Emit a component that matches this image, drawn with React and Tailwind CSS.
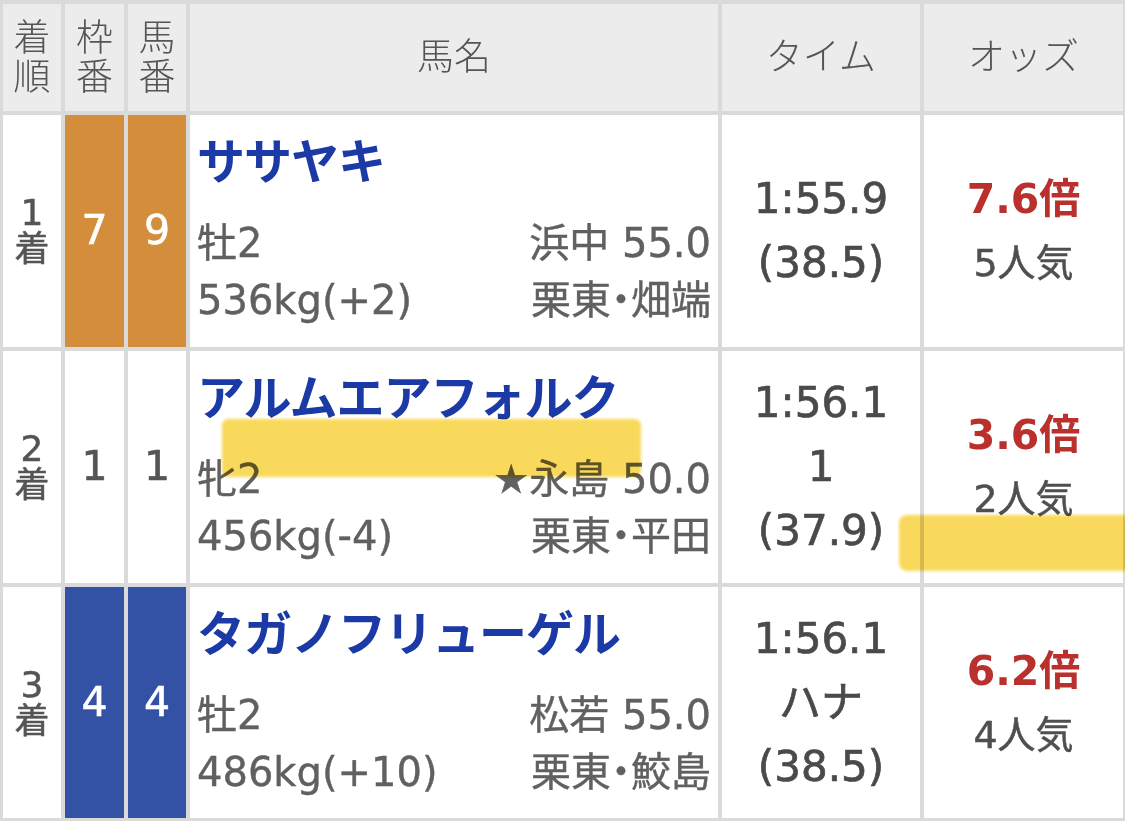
const rows = [
  {
    rank: "1",
    waku: "7",
    uma: "9",
    gate: "bg-[#d48d3b] text-white",
    name: "ササヤキ",
    sex: "牡2",
    jockey: "浜中 55.0",
    weight: "536kg(+2)",
    stable: ["栗東", "畑端"],
    time: ["1:55.9", "(38.5)"],
    odds: "7.6倍",
    pop: "5人気",
  },
  {
    rank: "2",
    waku: "1",
    uma: "1",
    gate: "bg-white text-[#555]",
    name: "アルムエアフォルク",
    sex: "牝2",
    jockey: "★永島 50.0",
    weight: "456kg(-4)",
    stable: ["栗東", "平田"],
    time: ["1:56.1", "1", "(37.9)"],
    odds: "3.6倍",
    pop: "2人気",
  },
  {
    rank: "3",
    waku: "4",
    uma: "4",
    gate: "bg-[#3452a5] text-white",
    name: "タガノフリューゲル",
    sex: "牡2",
    jockey: "松若 55.0",
    weight: "486kg(+10)",
    stable: ["栗東", "鮫島"],
    time: ["1:56.1", "ハナ", "(38.5)"],
    odds: "6.2倍",
    pop: "4人気",
  },
];

function Head({ children }) {
  return (
    <div className="bg-[#ececec] flex flex-col items-center justify-center text-[37px] leading-[39px] font-light text-[#555] text-center">
      {children}
    </div>
  );
}

export default function App() {
  return (
    <div className="relative w-[1125px] h-[821px] overflow-hidden bg-[#dadada] font-['DejaVu_Sans','Noto_Sans_CJK_JP',sans-serif]">
      <div className="grid grid-cols-[58px_59px_58px_528px_198px_199px] grid-rows-[107px_232px_232px_231px] gap-[4px] pl-[3px] pr-[2px] pt-[4px] pb-[3px]">
        <Head>
          <div>着</div>
          <div>順</div>
        </Head>
        <Head>
          <div>枠</div>
          <div>番</div>
        </Head>
        <Head>
          <div>馬</div>
          <div>番</div>
        </Head>
        <Head>馬名</Head>
        <Head>タイム</Head>
        <Head>オッズ</Head>

        {rows.map((r) => (
          <div key={r.rank} className="contents">
            <div className="bg-white flex flex-col items-center justify-center text-center text-[#555] [-webkit-text-stroke:0.5px_#555]">
              <div className="text-[36px] leading-[36px]">{r.rank}</div>
              <div className="text-[35px] leading-[36px]">着</div>
            </div>
            <div className={`${r.gate} flex items-center justify-center text-[41px] [-webkit-text-stroke:0.6px_currentColor]`}>{r.waku}</div>
            <div className={`${r.gate} flex items-center justify-center text-[41px] [-webkit-text-stroke:0.6px_currentColor]`}>{r.uma}</div>

            <div className="bg-white pl-[7px] pr-[7px] pt-[19px] text-[#606060]">
              <div className="text-[48px] leading-[56px] font-bold text-[#1b3aa6] tracking-[-1px]">{r.name}</div>
              <div className="[-webkit-text-stroke:0.4px_#606060]">
                <div className="mt-[25px] flex justify-between text-[40px] leading-[57px]">
                  <span>{r.sex}</span>
                  <span>{r.jockey}</span>
                </div>
                <div className="flex justify-between text-[40px] leading-[57px]">
                  <span>{r.weight}</span>
                  <span className="[font-feature-settings:'palt']">
                    {r.stable[0]}・{r.stable[1]}
                  </span>
                </div>
              </div>
            </div>

            <div className="bg-white flex flex-col items-center justify-center text-[42px] leading-[64px] text-[#4a4a4a] [-webkit-text-stroke:0.7px_#4a4a4a]">
              {r.time.map((t, i) => (
                <div key={i}>{t}</div>
              ))}
            </div>

            <div className="bg-white flex flex-col items-center justify-center">
              <div className="text-[41px] leading-[64px] font-bold text-[#b9302c]">{r.odds}</div>
              <div className="text-[38px] leading-[64px] text-[#4f4f4f] [-webkit-text-stroke:0.5px_#4f4f4f]">{r.pop}</div>
            </div>
          </div>
        ))}
      </div>

      <div className="absolute left-[222px] top-[419px] w-[419px] h-[58px] rounded-[6px] bg-[#f8d54a] opacity-90 mix-blend-multiply blur-[1.5px]" />
      <div className="absolute left-[899px] top-[515px] w-[232px] h-[56px] rounded-l-[8px] bg-[#f8d54a] opacity-90 mix-blend-multiply blur-[1.5px]" />
    </div>
  );
}
